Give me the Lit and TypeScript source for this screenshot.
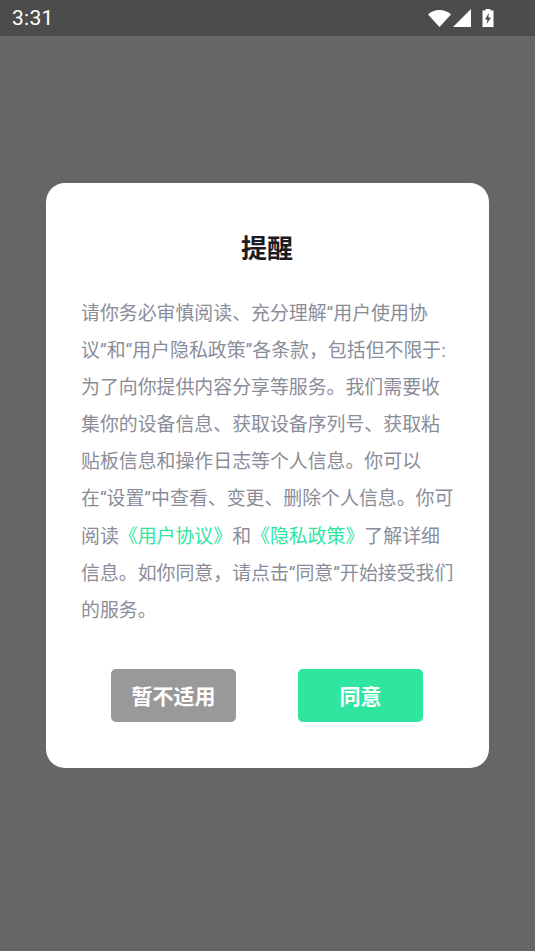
import { LitElement, html, css } from "lit";
import { customElement } from "lit/decorators.js";

@customElement("app-root")
export class AppRoot extends LitElement {
  static styles = css`
    :host {
      display: flex;
      flex-direction: column;
      height: 951px;
      background: #666666;
      font-family: Roboto, "Noto Sans CJK SC", sans-serif;
      overflow: hidden;
    }
    .status {
      height: 36px;
      flex: none;
      background: #4c4c4c;
      display: flex;
      align-items: center;
      justify-content: space-between;
      padding: 0 41px 0 12px;
      color: #fff;
      font-size: 21px;
      letter-spacing: 0.3px;
      box-sizing: border-box;
    }
    .icons { display: flex; align-items: center; gap: 2px; }
    .icons svg { display: block; }
    .battery { margin-left: 9px; }
    .main {
      flex: 1;
      display: flex;
      align-items: center;
      justify-content: center;
      padding-bottom: 36px;
    }
    .card {
      width: 443px;
      height: 585px;
      box-sizing: border-box;
      background: #fff;
      border-radius: 19px;
      padding: 48px 36px 46px 35px;
      display: flex;
      flex-direction: column;
    }
    h1 {
      margin: 0;
      font-size: 26px;
      line-height: 36px;
      font-weight: 700;
      color: #1c1c1e;
      text-align: center;
    }
    .body {
      margin: 28px 0 0;
      font-size: 18.9px;
      line-height: 37.1px;
      color: #8a8d99;
      white-space: nowrap;
    }
    .link { color: #2ee6a0; }
    .actions {
      margin-top: auto;
      display: flex;
      justify-content: center;
      gap: 62px;
    }
    .btn {
      width: 125px;
      height: 53px;
      box-sizing: border-box;
      padding-bottom: 2px;
      border-radius: 5px;
      display: flex;
      align-items: center;
      justify-content: center;
      color: #fff;
      font-size: 21px;
      font-weight: 700;
    }
    .grey { background: #999999; }
    .green { background: #2ee6a0; }
  `;

  render() {
    return html`
      <div class="status">
        <span>3:31</span>
        <div class="icons">
          <svg width="23" height="18" viewBox="0 0 23 18"><path d="M0 5.5C3 2.7 7 1 11.5 1S20 2.7 23 5.5L11.5 18Z" fill="#fff"/></svg>
          <svg width="18" height="18" viewBox="0 0 18 18"><path d="M18 0V18H0Z" fill="#fff"/></svg>
          <svg class="battery" width="12" height="18" viewBox="0 0 12 18"><path fill-rule="evenodd" d="M3.5 0H8.5V1.5H11.5V18H.5V1.5H3.5ZM6.8 4 3 10.5H5.4L4.8 15 9 8.5H6.4Z" fill="#fff"/></svg>
        </div>
      </div>
      <div class="main">
        <div class="card">
          <h1>提醒</h1>
          <div class="body">
            请你务必审慎阅读、充分理解“用户使用协<br>
            议”和“用户隐私政策”各条款，包括但不限于:<br>
            为了向你提供内容分享等服务。我们需要收<br>
            集你的设备信息、获取设备序列号、获取粘<br>
            贴板信息和操作日志等个人信息。你可以<br>
            在“设置”中查看、变更、删除个人信息。你可<br>
            阅读<span class="link">《用户协议》</span>和<span class="link">《隐私政策》</span>了解详细<br>
            信息。如你同意，请点击“同意”开始接受我们<br>
            的服务。
          </div>
          <div class="actions">
            <div class="btn grey">暂不适用</div>
            <div class="btn green">同意</div>
          </div>
        </div>
      </div>
    `;
  }
}
